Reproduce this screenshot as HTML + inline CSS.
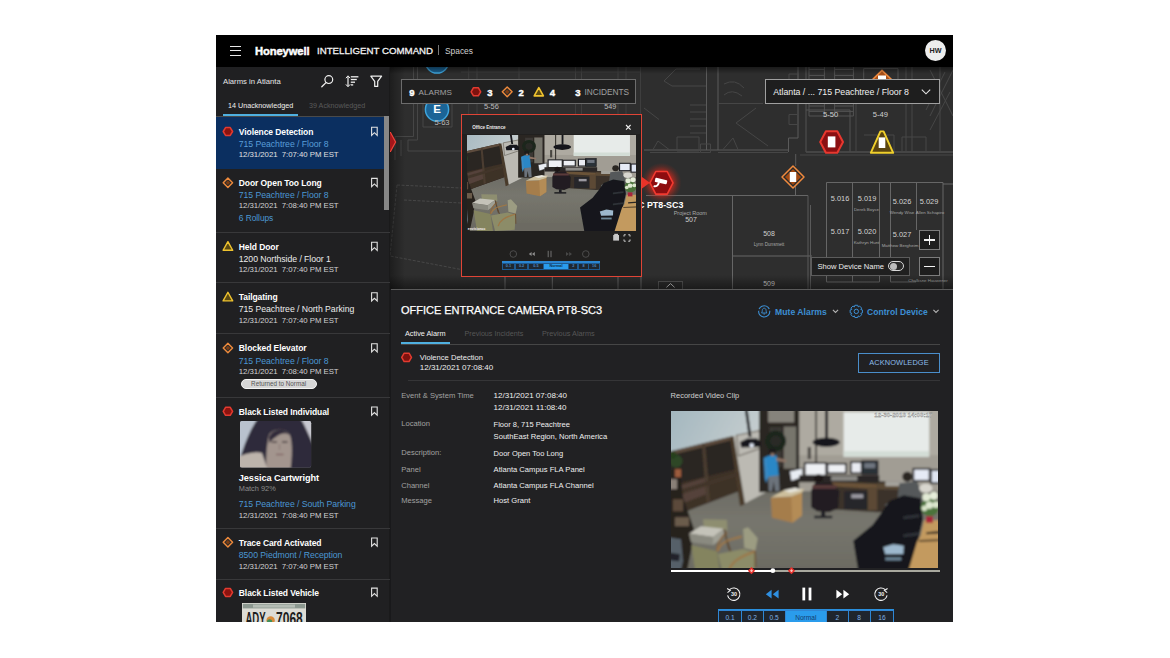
<!DOCTYPE html>
<html><head><meta charset="utf-8"><title>Honeywell Intelligent Command</title>
<style>
html,body{margin:0;padding:0;background:#fff;}
body{width:1170px;height:658px;position:relative;overflow:hidden;font-family:"Liberation Sans",sans-serif;}
.t{position:absolute;white-space:pre;display:block;}
.r{position:absolute;box-sizing:border-box;}
svg{position:absolute;overflow:visible;}
#app{position:absolute;left:216px;top:35px;width:737px;height:587px;background:#212121;overflow:hidden;}
</style></head><body>

<div class="r" style="left:216px;top:35px;width:737px;height:587px;background:#212121;"></div>
<svg width="0" height="0" style="position:absolute"><defs><filter id="vb" x="-5%" y="-5%" width="110%" height="110%"><feGaussianBlur stdDeviation="0.9"/></filter><linearGradient id="lw" x1="0" y1="0" x2="1" y2="0.3"><stop offset="0" stop-color="#9fb4bd"/><stop offset="1" stop-color="#c3ccce"/></linearGradient><linearGradient id="fl" x1="0" y1="0" x2="0" y2="1"><stop offset="0" stop-color="#66655e"/><stop offset="0.5" stop-color="#77766e"/><stop offset="1" stop-color="#6c6b62"/></linearGradient><g id="office"><rect x="-9" y="-9" width="290" height="200" fill="#706f67"/><g filter="url(#vb)"><rect x="-9" y="60" width="290" height="100" fill="url(#fl)"/><rect x="-9" y="155" width="290" height="40" fill="#6c6b62"/><rect x="126" y="-9" width="152" height="88" fill="#aeaaa1"/><rect x="126" y="44" width="152" height="36" fill="#a19d94"/><polygon points="-9,-9 90,-9 90,22 60,26 -9,43.5" fill="url(#lw)"/><polygon points="-9,42.5 60,25.5 67.5,80 22.8,97 -9,110" fill="#2c2622"/><polygon points="-9,76 65,58 67.5,80 22.8,97 -9,110" fill="#3d3027"/><polygon points="10,74 36,66 38,82 12,92" fill="#54423a"/><polygon points="-9,42.5 60,25.5 60.8,29 -9,46" fill="#5d4c3c"/><polygon points="59,26 62.5,25 73.5,93 69,95" fill="#4a3a2b"/><polygon points="31,33.5 34,32.8 39,90 35.5,91.5" fill="#4b3d30"/><polygon points="-9,84 66,61 66.6,65 -9,89" fill="#43362a"/><polygon points="62.5,25 90,18 97,80 74,92" fill="#bcbab3"/><polygon points="65.4,24.2 88.8,19.6 89,37.2 67.4,45" fill="none" stroke="#6f6a62" stroke-width="1.1"/><rect x="88" y="-9" width="40" height="90" fill="#2b2723"/><rect x="97" y="-9" width="26" height="20.5" fill="#86837b"/><rect x="112.5" y="15.5" width="12.5" height="42" fill="#77746c"/><rect x="98.5" y="16" width="12" height="40" fill="#3b3834"/><circle cx="104.5" cy="30" r="8" fill="#2a2a26" stroke="#1c281c" stroke-width="5"/><polygon points="72.6,-9 75.4,-9 80.4,26 77.6,26" fill="#17171b"/><polygon points="69,31 76,27.5 86,27.5 89.5,31 89,36 70,36.5" fill="#15151a"/><circle cx="80.6" cy="34.2" r="2.1" fill="#e8f0ff"/><rect x="154" y="-9" width="2.8" height="36" fill="#17171b"/><rect x="144.2" y="-9" width="1.5" height="61" fill="#2a2724"/><ellipse cx="155" cy="31.2" rx="13.5" ry="4.6" fill="#15151a"/><rect x="136.5" y="36" width="3.2" height="12" fill="#4a4742"/><rect x="172.4" y="1.2" width="85.4" height="44.5" fill="#e7ebe9"/><rect x="172.4" y="40" width="85.4" height="5.6" fill="#d3ddd6"/><polygon points="150,70 230,70 232,100 206,101 160,98" fill="#3a332c"/><polygon points="160,70.5 206,73 206,78 160,75" fill="#6a5238"/><rect x="196.4" y="76" width="9.5" height="23" fill="#5c4a36"/><rect x="173" y="80" width="23" height="18" fill="#28262a"/><rect x="180" y="83" width="12" height="4" fill="#9a98a0"/><polygon points="206,72 243,73 243,79 206,78" fill="#5a4936"/><rect x="214" y="70" width="18" height="5" fill="#a5a39c"/><polygon points="118.3,60 131.5,57 131.5,66 120,70.2" fill="#e9edf3" stroke="#1c1c20" stroke-width="0.8"/><rect x="133.5" y="52" width="21.5" height="12.5" fill="#eef0f4" stroke="#1c1c20" stroke-width="1.7"/><rect x="156.2" y="52.6" width="18.6" height="9.4" fill="#eef0f4" stroke="#1c1c20" stroke-width="1.7"/><rect x="179.6" y="51" width="10.8" height="11" fill="#e9ebf2" stroke="#1c1c20" stroke-width="1.7"/><rect x="190.6" y="49.8" width="16" height="13.2" fill="#2c3037" stroke="#17171b" stroke-width="1"/><rect x="193" y="52" width="11" height="5" fill="#6f7680"/><rect x="242" y="57.6" width="16.3" height="12" fill="#e6ebf6" stroke="#1c1c20" stroke-width="1.7"/><rect x="259.5" y="58.8" width="18" height="13.2" fill="#dfe5f2" stroke="#1c1c20" stroke-width="1.7"/><rect x="128" y="64" width="80" height="7" fill="#2a2725"/><rect x="160" y="65" width="26" height="4.5" fill="#8c8a86"/><polygon points="97,64 107.6,63 108.5,80 104,80 102.5,70 101,80 97.6,80" fill="#6c737b"/><polygon points="92.4,47 98,44.5 105.6,44.4 107.6,64 96.2,65.6" fill="#2b87c6"/><polygon points="105,46.5 115.4,49 115,51 105.4,50" fill="#8f7566"/><polygon points="92.6,48 95,47 97,66 95,72 93.6,66" fill="#3a8ac2"/><circle cx="101" cy="40.4" r="3.6" fill="#1d1a1a"/><rect x="99.6" y="42" width="3.4" height="3" fill="#8f7566"/><polygon points="99.6,86.2 120,85 130.8,81.4 130.8,104.2 121.2,111.4 100.8,106.6" fill="#a57d4b"/><polygon points="120,85 130.8,81.4 130.8,104.2 121.2,111.4" fill="#b48c57"/><polygon points="99.6,86.2 112,79.5 133,77.5 130.8,81.4 120,85.4" fill="#cdbf9d"/><polygon points="112,79 124,76.5 131,78.5 119,81.5" fill="#e6e4da"/><polygon points="140,79 144,71 160,71 168,80 167,97 158,101 146,100 140,96" fill="#221e20"/><rect x="141" y="74" width="24" height="3.5" fill="#5a3a3a"/><circle cx="147.4" cy="67.4" r="4.3" fill="#1b1818"/><rect x="150" y="100" width="4" height="6" fill="#1d1d20"/><rect x="143" y="104.5" width="18" height="2.5" fill="#222226"/><polygon points="228,72 246,70 251,86 250,108 226,108 214,100 216,92 226,88" fill="#55585a"/><polygon points="214,93 228,90 232,104 216,104" fill="#6b6e70"/><circle cx="236" cy="65.6" r="5" fill="#292523"/><ellipse cx="254.5" cy="77" rx="6.5" ry="4.5" fill="#d8d6cf"/><polygon points="182,129.4 201.2,113.8 210.8,100.6 218,89.8 232.4,84 249.2,87 251.6,107.8 246.8,129.4 232,190 192,190" fill="#17191d"/><polygon points="212,136 222,133 232.4,134.5 232,142.6 214,143" fill="#9db8cd"/><rect x="214" y="146" width="16" height="3" fill="#6d8698"/><polygon points="232,105 248,103 248,106 232,108" fill="#2f3237"/><polygon points="232,123 248,121 248,124 232,126" fill="#2f3237"/><polygon points="252.8,109 277,109 277,190 228,190 245.6,130.6 249.2,124.6" fill="#c39a5e"/><polygon points="248,128.6 277,127.4 277,129.4 247.4,130.6" fill="#5e4a30"/><polygon points="255,121 277,119 277,121.4 255,123" fill="#2a2622"/><circle cx="258.6" cy="96" r="9" fill="#4b733a"/><circle cx="255" cy="86" r="4" fill="#e2ead6"/><circle cx="262.5" cy="84.5" r="4" fill="#e6edda"/><circle cx="258" cy="94" r="3.6" fill="#dfe8d2"/><circle cx="264.5" cy="93.5" r="3.2" fill="#dbe6cd"/><circle cx="253" cy="97" r="2.8" fill="#d7e2c8"/><rect x="254.6" y="105" width="7" height="6.5" fill="#a8263a"/><polygon points="-9,60 9,58 12,86 23,118 20,140 10,190 -9,190" fill="#27211d"/><rect x="2" y="88" width="10" height="12" fill="#5c4a3a"/><rect x="4" y="106" width="14" height="9" fill="#6a5b4c"/><rect x="-2" y="68" width="8" height="10" fill="#8a8078"/><circle cx="5" cy="50" r="6.4" fill="#2d4628"/><circle cx="2" cy="44" r="3.5" fill="#26401f"/><rect x="4" y="58" width="6" height="8" fill="#9c5c3c"/><polygon points="-9,125 10,128 12,150 2,190 -9,190" fill="#566069"/><polygon points="-9,140 9,143 8,150 -9,148" fill="#20242a"/><polygon points="32,108 55.8,108.5 56.4,119 33,118.6" fill="#8e8e70"/><polygon points="20.4,134 46,140 50,170 26,172" fill="#84845f"/><polygon points="18,122.2 30,115 52.8,117.4 42,125.8" fill="#c4c3b9"/><polygon points="18,122.2 42,125.8 42,134 20,131" fill="#8a8a80"/><polygon points="42,125.8 52.8,117.4 53,125 42,134" fill="#9f9f94"/><path d="M46,140 C46,132 50,126 56,121" fill="none" stroke="#8b6a44" stroke-width="2"/><path d="M53,118 L58,138" stroke="#5e4830" stroke-width="1.6"/><polygon points="72,117.6 77,116 86.6,127 84.2,139.4 73.2,136.6" fill="#9c9c82"/><polygon points="46.8,142.6 72,137.6 84,141.4 82.8,166 53,168" fill="#8c8c68"/><path d="M46.8,139.6 C49,132 54,129 70.8,125.2" fill="none" stroke="#9d7747" stroke-width="2.1"/><path d="M57.6,160 C60,151 67,146 84,139.8" fill="none" stroke="#9d7747" stroke-width="2.1"/><path d="M56,130 L59.5,140" stroke="#5e4830" stroke-width="1.6"/><path d="M84,140 L84.5,156" stroke="#6e5638" stroke-width="1.6"/></g><text x="261" y="6.2" text-anchor="end" font-family="Liberation Sans" font-weight="700" font-size="5.4" fill="#f2f2f2" stroke="#6f6f6f" stroke-width="0.25" textLength="58" lengthAdjust="spacingAndGlyphs">12-30-2018 14:08:17</text></g></defs></svg>
<div class="r" style="left:389px;top:67px;width:564px;height:223px;background:#2e2e2e;"></div>
<svg width="1170" height="658" style="left:0;top:0">
<defs><radialGradient id="rg"><stop offset="0" stop-color="#ff2a1a" stop-opacity="0.9"/><stop offset="0.6" stop-color="#e8281a" stop-opacity="0.55"/><stop offset="0.82" stop-color="#d02818" stop-opacity="0.2"/><stop offset="1" stop-color="#c02818" stop-opacity="0"/></radialGradient></defs>
<g fill="none" stroke="#464646" stroke-width="1">
<path d="M413.5,67 V136.5 H395 M417.5,67 V140 H408 V151 H461 M395,136.5 V160 M401,140 V156 M423,104 V127 H452 V104"/>
<path d="M706.5,67 V150 M718,67 V150 M644,150 H788 M798,67 V138 M788.5,138 V152 M788.5,138 H798 M795.7,154 V166 M806,152 H953" stroke="#5a5a5a"/>
<path d="M650,152.5 H700 M718,152.5 H788 M700.5,144 H710.5 V152.5 H700.5 Z M718,103.5 H763"/>
<path d="M789,114.5 H798 V124.5 H789 Z M789,74 H798 V80 H789 Z"/>
<path d="M736,123 L756,108 M736,123 L768,146 M723,149.5 L733,138 L738,149.5 M644,108 L659,119.5 M653,149.5 L658,141 L669,149.5 M677,137 H699 V151 H677 Z"/>
<path d="M468.7,67 V114 M477,67 V114 M519,67 V114 M575.5,67 V114 M581.5,67 V114 M618,67 V114 M626,67 V114 M640.5,67 V114 M461,72 H640" stroke="#3e3e3e"/>
<path d="M690,105 H706 M690,112 H706 M690,119 H706 M690,126 H706 M690,133 H706"/>
<path d="M664,81 L676,69 H700 M664,81 L672,86 H706 M724,84 Q735,78 744,88 M724,95 Q732,88 742,96"/>
<path d="M806,67 V152 M809,67 V116 M824.4,67 V116 M834.6,67 V116 M853.4,67 V116 M806,110 H850 V152" stroke="#525252"/>
<path d="M809,69.4 H824.4 M809,75.4 H824.4 M809,106 H824.4 M809,111.4 H824.4 M834.6,69.4 H853.4 M834.6,75.4 H853.4 M834.6,106 H853.4 M834.6,111.4 H853.4 M809,116 H853.4 M863.7,68.6 H898 V79 M863.7,68.6 V79" stroke="#525252"/>
<path d="M930,70 L953,116 M953,70 L930,116" stroke="#484848"/>
<path d="M856,104 V152 M906,67 V152 M912,67 V152 M864,135 H894 V152 M902,137 H926 V152 H902 Z M806,152 H953 M800,155 H953"/>
<path d="M926,110 L945,72 M930,130 L950,92 M940,67 V152"/>
</g>
<g fill="none" stroke="#666666" stroke-width="1">
<path d="M646,195.5 H808 M943,184 H953 M732.5,195.5 V289 M732.5,256 H812 M795.5,183 V195.5 M505,276 V289 M552.3,276 V289 M618,276 V289 M641,276 V289"/>
<path d="M826.5,182.5 H943 M826.5,182.5 V282 M852.5,182.5 V282 M879.5,182.5 V282 M890.5,182.5 V282 M916.5,182.5 V230 M943,182.5 V289 M826.5,282 H879.5 M890.5,282 H916"/>
<path d="M808,195.5 V289 M810.5,205 V289" stroke="#5a5a5a"/>
</g>
<path d="M397,185 L461,188 M397,185 L390,256 L461,269.5 M404,200 L461,203" fill="none" stroke="#474747" stroke-width="1" stroke-dasharray="3 1.5"/>
<circle cx="437" cy="61.5" r="11.6" fill="#1b6496" stroke="#3fa6de" stroke-width="1.5"/>
<circle cx="437" cy="109.5" r="11.6" fill="#1b6496" stroke="#3fa6de" stroke-width="1.5"/>
<polygon points="870,82 882,70.4 894,82 882,93.5" fill="#a85018" stroke="#f08a3e" stroke-width="1.6"/><rect x="878" y="75.5" width="8" height="10" fill="#fff"/>
<polygon points="843.0,142.0 837.3,152.8 825.9,152.8 820.2,142.0 825.9,131.2 837.3,131.2" fill="#8a0f12" stroke="#e8382f" stroke-width="2" stroke-linejoin="round"/>
<rect x="827.8000000000001" y="136.4" width="7.6" height="11" fill="#fff"/>
<polygon points="870.8,152.8 880.4,131.4 883.6,131.4 893.2,152.8" fill="#5a4510" stroke="#f0d02c" stroke-width="1.9" stroke-linejoin="round"/>
<rect x="878.7" y="137.4" width="6.6" height="10.6" fill="#fff"/>
<polygon points="782,177 793,166 804,177 793,188" fill="#2a2a2a" stroke="#f08a3e" stroke-width="1.5" stroke-linejoin="round"/>
<polygon points="785,177 793,169 801,177 793,185" fill="#a34a12"/>
<rect x="789.8" y="172" width="6.4" height="10" fill="#fff"/>
<circle cx="661.5" cy="182.8" r="20" fill="url(#rg)"/>
<polygon points="640,175.6 649.8,182.8 640,190" fill="#ea3228"/>
<polygon points="673.0,182.8 667.2,194.1 655.8,194.1 650.0,182.8 655.8,171.5 667.2,171.5" fill="#8d0d10" stroke="#f23a30" stroke-width="1.6" stroke-linejoin="round"/>
<g transform="translate(661.1,181.20000000000002) rotate(13)"><rect x="-6.2" y="-2.2" width="12.2" height="4.2" rx="0.9" fill="#fff"/><path d="M-1.8,1.6 C-2,4.8 -3.4,6.6 -6.2,6.4" fill="none" stroke="#fff" stroke-width="1.9"/></g>
</svg>
<span class="t" style="left:437px;top:101.30px;font-size:11.5px;line-height:16px;color:#fff;font-weight:700;transform:translateX(-50%);">E</span>
<span class="t" style="left:442px;top:117.10px;font-size:7.6px;line-height:11px;color:#bdbdbd;transform:translateX(-50%);">5-63</span>
<span class="t" style="left:491.4px;top:102.00px;font-size:7.4px;line-height:10px;color:#bdbdbd;transform:translateX(-50%);">5-56</span>
<span class="t" style="left:610.3px;top:102.40px;font-size:7.2px;line-height:10px;color:#bdbdbd;transform:translateX(-50%);">549</span>
<span class="t" style="left:830.6px;top:109.10px;font-size:7.6px;line-height:11px;color:#d0d0d0;transform:translateX(-50%);">5-50</span>
<span class="t" style="left:880.4px;top:109.10px;font-size:7.6px;line-height:11px;color:#d0d0d0;transform:translateX(-50%);">5-49</span>
<span class="t" style="left:683.4px;top:198.60px;font-size:8.9px;line-height:12px;color:#fff;font-weight:700;transform:translateX(-100%);">C PT8-SC3</span>
<span class="t" style="left:690.3px;top:209.40px;font-size:5.5px;line-height:8px;color:#a8a8a8;transform:translateX(-50%);">Project Room</span>
<span class="t" style="left:691px;top:215.40px;font-size:7px;line-height:10px;color:#cfcfcf;transform:translateX(-50%);">507</span>
<span class="t" style="left:769px;top:229.40px;font-size:7px;line-height:10px;color:#cfcfcf;transform:translateX(-50%);">508</span>
<span class="t" style="left:769px;top:242.00px;font-size:4.6px;line-height:6px;color:#a8a8a8;transform:translateX(-50%);">Lynn Dunsmett</span>
<span class="t" style="left:769px;top:279.00px;font-size:7px;line-height:10px;color:#cfcfcf;transform:translateX(-50%);">509</span>
<span class="t" style="left:840px;top:193.60px;font-size:7.4px;line-height:10px;color:#d4d4d4;transform:translateX(-50%);">5.016</span>
<span class="t" style="left:867px;top:193.60px;font-size:7.4px;line-height:10px;color:#d4d4d4;transform:translateX(-50%);">5.019</span>
<span class="t" style="left:902px;top:196.60px;font-size:7.4px;line-height:10px;color:#d4d4d4;transform:translateX(-50%);">5.026</span>
<span class="t" style="left:929px;top:196.60px;font-size:7.4px;line-height:10px;color:#d4d4d4;transform:translateX(-50%);">5.029</span>
<span class="t" style="left:840px;top:227.00px;font-size:7.4px;line-height:10px;color:#d4d4d4;transform:translateX(-50%);">5.017</span>
<span class="t" style="left:867px;top:227.00px;font-size:7.4px;line-height:10px;color:#d4d4d4;transform:translateX(-50%);">5.020</span>
<span class="t" style="left:902px;top:230.00px;font-size:7.4px;line-height:10px;color:#d4d4d4;transform:translateX(-50%);">5.027</span>
<span class="t" style="left:866.5px;top:206.80px;font-size:4.4px;line-height:6px;color:#a6a6a6;transform:translateX(-50%);">Derek Boyce</span>
<span class="t" style="left:902px;top:209.80px;font-size:4.4px;line-height:6px;color:#a6a6a6;transform:translateX(-50%);">Wendy Wise</span>
<span class="t" style="left:930px;top:209.80px;font-size:4.4px;line-height:6px;color:#a6a6a6;transform:translateX(-50%);">Allen Schapiro</span>
<span class="t" style="left:866.5px;top:240.20px;font-size:4.4px;line-height:6px;color:#a6a6a6;transform:translateX(-50%);">Kathryn Hunt</span>
<span class="t" style="left:900px;top:243.00px;font-size:4.4px;line-height:6px;color:#a6a6a6;transform:translateX(-50%);">Matthew Bergheim</span>
<span class="t" style="left:928px;top:278.00px;font-size:4.4px;line-height:6px;color:#a6a6a6;transform:translateX(-50%);">Chalksne Hauwener</span>
<div class="r" style="left:658px;top:281px;width:25px;height:9px;background:#2b2b2b;border:1px solid #565656;border-bottom:none;"></div>
<svg width="1170" height="658" style="left:0;top:0"><path d="M666.4,287.4 L670.5,283.6 L674.6,287.4" fill="none" stroke="#c8c8c8" stroke-width="1"/></svg>
<div class="r" style="left:389px;top:67px;width:16px;height:223px;background:linear-gradient(to right, rgba(0,0,0,0.38), rgba(0,0,0,0));"></div>
<div class="r" style="left:389px;top:67px;width:564px;height:7px;background:linear-gradient(to bottom, rgba(0,0,0,0.45), rgba(0,0,0,0));"></div>
<div class="r" style="left:389px;top:275px;width:564px;height:14px;background:linear-gradient(to top, rgba(0,0,0,0.42), rgba(0,0,0,0));"></div>
<svg width="1170" height="658" style="left:0;top:0"><polygon points="385,132.5 390.5,132.5 395.6,142 390.5,151.5 385,151.5" fill="#a5161a" stroke="#f0453a" stroke-width="1.2"/></svg>
<div class="r" style="left:401.2px;top:79.2px;width:235px;height:24.6px;background:#202020;border:1px solid #6c6c6c;"></div>
<span class="t" style="left:409.2px;top:85.50px;font-size:9.5px;line-height:13px;color:#fff;font-weight:700;-webkit-text-stroke:0.4px #fff;">9</span>
<span class="t" style="left:418.6px;top:86.80px;font-size:8.1px;line-height:11px;color:#a0a0a0;">ALARMS</span>
<span class="t" style="left:487.2px;top:85.50px;font-size:9.5px;line-height:13px;color:#fff;font-weight:700;-webkit-text-stroke:0.4px #fff;">3</span>
<span class="t" style="left:518.6px;top:85.50px;font-size:9.5px;line-height:13px;color:#fff;font-weight:700;-webkit-text-stroke:0.4px #fff;">2</span>
<span class="t" style="left:549.8px;top:85.50px;font-size:9.5px;line-height:13px;color:#fff;font-weight:700;-webkit-text-stroke:0.4px #fff;">4</span>
<span class="t" style="left:575.2px;top:85.50px;font-size:9.5px;line-height:13px;color:#fff;font-weight:700;-webkit-text-stroke:0.4px #fff;">3</span>
<span class="t" style="left:584.4px;top:86.30px;font-size:8.3px;line-height:12px;color:#a0a0a0;">INCIDENTS</span>
<svg width="1170" height="658" style="left:0;top:0">
<polygon points="480.70,91.80 478.30,95.87 473.50,95.87 471.10,91.80 473.50,87.73 478.30,87.73" fill="#7e120e" stroke="#e23b30" stroke-width="1.5" stroke-linejoin="round"/>
<polygon points="502.3,91.8 507.2,86.89999999999999 512.1,91.8 507.2,96.7" fill="#2a2a2a" stroke="#ee8a3c" stroke-width="1.4" stroke-linejoin="round"/>
<polygon points="504.848,91.8 507.2,89.448 509.55199999999996,91.8 507.2,94.152" fill="#7c3d14"/>
<polygon points="534.1999999999999,95.91 538.8,87.63 543.4,95.91" fill="#5b4a12" stroke="#efc32f" stroke-width="1.6" stroke-linejoin="round"/>
</svg>
<div class="r" style="left:765px;top:79.3px;width:175px;height:24.4px;background:#1e1e1e;border:1px solid #a0a0a0;"></div>
<span class="t" style="left:773.2px;top:86.00px;font-size:8.8px;line-height:12px;color:#f0f0f0;letter-spacing:-0.02px;">Atlanta / ... 715 Peachtree / Floor 8</span>
<svg width="1170" height="658" style="left:0;top:0"><path d="M921.8,89.6 L926,93.8 L930.2,89.6" fill="none" stroke="#e4e4e4" stroke-width="1.1"/></svg>
<div class="r" style="left:811.2px;top:256.8px;width:98.4px;height:19.4px;background:#202020;border:1px solid #5c5c5c;"></div>
<span class="t" style="left:817.4px;top:261.10px;font-size:7.6px;line-height:11px;color:#ececec;">Show Device Name</span>
<div class="r" style="left:888.4px;top:261.4px;width:15.6px;height:9.6px;background:#2a2a2a;border:1px solid #d8d8d8;border-radius:5px;"></div>
<div class="r" style="left:889.8px;top:262.7px;width:7px;height:7px;background:#bdbdbd;border-radius:50%;"></div>
<div class="r" style="left:918.8px;top:229.8px;width:21px;height:20.4px;background:#1e1e1e;border:1px solid #7c7c7c;"></div>
<div class="r" style="left:918.8px;top:256.8px;width:21px;height:19.4px;background:#1e1e1e;border:1px solid #7c7c7c;"></div>
<div class="r" style="left:924.2px;top:239.4px;width:10.4px;height:1.3px;background:#f4f4f4;"></div>
<div class="r" style="left:928.75px;top:234.8px;width:1.3px;height:10.4px;background:#f4f4f4;"></div>
<div class="r" style="left:924.2px;top:265.9px;width:10.4px;height:1.3px;background:#f4f4f4;"></div>
<div class="r" style="left:460.6px;top:113.6px;width:181.4px;height:163px;background:#21201f;border:1.6px solid #e04436;"></div>
<div class="r" style="left:462.2px;top:115.2px;width:178.2px;height:19px;background:#272727;"></div>
<span class="t" style="left:472.2px;top:125.20px;font-size:4.6px;line-height:6px;color:#e8e8e8;font-weight:700;letter-spacing:-0.05px;">Office Entrance</span>
<svg width="1170" height="658" style="left:0;top:0"><path d="M626,125 l4.6,4.6 M630.6,125 l-4.6,4.6" stroke="#f0f0f0" stroke-width="1.1"/></svg>
<svg style="left:467px;top:134.6px;overflow:hidden" width="169" height="96.4" viewBox="10.3 11.5 256.7 157" preserveAspectRatio="none"><use href="#office"/></svg>
<span class="t" style="left:467.8px;top:226.90px;font-size:3.4px;line-height:5px;color:#f4f4f4;font-weight:700;">envisioncc</span>
<svg width="1170" height="658" style="left:0;top:0">
<rect x="613.2" y="235" width="5.8" height="5.6" fill="#c8c8c8"/><rect x="614.2" y="233.8" width="3.8" height="1.6" fill="#c8c8c8"/>
<path d="M624,236.6 v-1.8 h1.8 M628.2,234.8 h1.8 v1.8 M630,239.4 v1.8 h-1.8 M625.8,241.2 h-1.8 v-1.8" fill="none" stroke="#d8d8d8" stroke-width="0.9"/>
<circle cx="513.3" cy="254" r="3.3" fill="none" stroke="#505050" stroke-width="0.9"/><circle cx="585.8" cy="254" r="3.3" fill="none" stroke="#505050" stroke-width="0.9"/>
<path d="M531.6,252 l-2.8,2 l2.8,2 z M534.8,252 l-2.8,2 l2.8,2 z" fill="#8e8e8e"/>
<path d="M548.2,250.8 v6.4 M551,250.8 v6.4" stroke="#7a7a7a" stroke-width="0.9"/>
<path d="M566,252 l2.8,2 l-2.8,2 z M569.2,252 l2.8,2 l-2.8,2 z" fill="#484848"/>
</svg>
<div class="r" style="left:501.6px;top:261.4px;width:98px;height:1.4px;background:#2a86d2;"></div>
<div class="r" style="left:501.8px;top:262.6px;width:13.300000000000011px;height:7.2px;background:#1f2730;border:0.6px solid #1f5a90;"></div>
<span class="t" style="left:508.50000000000006px;top:263.70px;font-size:3.8px;line-height:5px;color:#4f8ac0;font-weight:700;transform:translateX(-50%);">0.1</span>
<div class="r" style="left:514.6px;top:262.6px;width:13.899999999999977px;height:7.2px;background:#1f2730;border:0.6px solid #1f5a90;"></div>
<span class="t" style="left:521.5999999999999px;top:263.70px;font-size:3.8px;line-height:5px;color:#4f8ac0;font-weight:700;transform:translateX(-50%);">0.2</span>
<div class="r" style="left:528px;top:262.6px;width:15.700000000000045px;height:7.2px;background:#1f2730;border:0.6px solid #1f5a90;"></div>
<span class="t" style="left:535.9px;top:263.70px;font-size:3.8px;line-height:5px;color:#4f8ac0;font-weight:700;transform:translateX(-50%);">0.5</span>
<div class="r" style="left:543.2px;top:262.6px;width:25.5px;height:7.2px;background:#2a9cec;border:0.6px solid #1f5a90;"></div>
<span class="t" style="left:556.0px;top:263.70px;font-size:3.8px;line-height:5px;color:#0c2a48;font-weight:700;transform:translateX(-50%);">Normal</span>
<div class="r" style="left:568.2px;top:262.6px;width:10.299999999999955px;height:7.2px;background:#1f2730;border:0.6px solid #1f5a90;"></div>
<span class="t" style="left:573.4px;top:263.70px;font-size:3.8px;line-height:5px;color:#4f8ac0;font-weight:700;transform:translateX(-50%);">2</span>
<div class="r" style="left:578px;top:262.6px;width:10.899999999999977px;height:7.2px;background:#1f2730;border:0.6px solid #1f5a90;"></div>
<span class="t" style="left:583.5px;top:263.70px;font-size:3.8px;line-height:5px;color:#4f8ac0;font-weight:700;transform:translateX(-50%);">8</span>
<div class="r" style="left:588.4px;top:262.6px;width:11.5px;height:7.2px;background:#1f2730;border:0.6px solid #1f5a90;"></div>
<span class="t" style="left:594.1999999999999px;top:263.70px;font-size:3.8px;line-height:5px;color:#4f8ac0;font-weight:700;transform:translateX(-50%);">16</span>
<div class="r" style="left:389px;top:289px;width:564px;height:333px;background:#212123;"></div>
<div class="r" style="left:389px;top:288.6px;width:564px;height:1.2px;background:#5a5a5a;"></div>
<span class="t" style="left:401px;top:303.10px;font-size:11px;line-height:15px;color:#ffffff;letter-spacing:-0.02px;-webkit-text-stroke:0.25px #fff;">OFFICE ENTRANCE CAMERA PT8-SC3</span>
<span class="t" style="left:775px;top:305.60px;font-size:8.6px;line-height:12px;color:#3d8fd3;font-weight:700;letter-spacing:0.05px;">Mute Alarms</span>
<span class="t" style="left:867px;top:305.60px;font-size:8.5px;line-height:12px;color:#3d8fd3;font-weight:700;letter-spacing:0.05px;">Control Device</span>
<span class="t" style="left:405px;top:328.60px;font-size:7.3px;line-height:10px;color:#f2f2f2;">Active Alarm</span>
<span class="t" style="left:464.5px;top:328.60px;font-size:7.2px;line-height:10px;color:#565656;">Previous Incidents</span>
<span class="t" style="left:542px;top:328.60px;font-size:7.3px;line-height:10px;color:#565656;">Previous Alarms</span>
<div class="r" style="left:401px;top:343.6px;width:539px;height:1px;background:#464646;"></div>
<div class="r" style="left:401px;top:342px;width:49px;height:2.2px;background:#4fb0e0;"></div>
<span class="t" style="left:419.8px;top:351.80px;font-size:7.6px;line-height:11px;color:#eeeeee;">Violence Detection</span>
<span class="t" style="left:419.8px;top:362.40px;font-size:8px;line-height:11px;color:#eeeeee;">12/31/2021 07:08:40</span>
<div class="r" style="left:858px;top:352.8px;width:82px;height:20.4px;border:1.1px solid #4a8ecb;"></div>
<span class="t" style="left:899px;top:357.60px;font-size:7.4px;line-height:10px;color:#8dbdea;letter-spacing:0.1px;transform:translateX(-50%);">ACKNOWLEDGE</span>
<div class="r" style="left:408px;top:379.7px;width:532px;height:1px;background:#353537;"></div>
<span class="t" style="left:401.2px;top:390.20px;font-size:7.6px;line-height:11px;color:#a2a2a2;">Event &amp; System Time</span>
<span class="t" style="left:401.2px;top:418.20px;font-size:7.6px;line-height:11px;color:#a2a2a2;">Location</span>
<span class="t" style="left:401.2px;top:446.70px;font-size:7.6px;line-height:11px;color:#a2a2a2;">Description:</span>
<span class="t" style="left:401.2px;top:463.70px;font-size:7.6px;line-height:11px;color:#a2a2a2;">Panel</span>
<span class="t" style="left:401.2px;top:480.20px;font-size:7.6px;line-height:11px;color:#a2a2a2;">Channel</span>
<span class="t" style="left:401.2px;top:495.20px;font-size:7.6px;line-height:11px;color:#a2a2a2;">Message</span>
<span class="t" style="left:493.6px;top:390.40px;font-size:8px;line-height:11px;color:#f0f0f0;">12/31/2021 07:08:40</span>
<span class="t" style="left:493.6px;top:402.20px;font-size:8px;line-height:11px;color:#f0f0f0;">12/31/2021 11:08:40</span>
<span class="t" style="left:493.6px;top:419.70px;font-size:7.5px;line-height:10px;color:#f0f0f0;">Floor 8, 715 Peachtree</span>
<span class="t" style="left:493.6px;top:430.70px;font-size:7.6px;line-height:11px;color:#f0f0f0;">SouthEast Region, North America</span>
<span class="t" style="left:493.6px;top:448.60px;font-size:7.5px;line-height:10px;color:#f0f0f0;">Door Open Too Long</span>
<span class="t" style="left:493.6px;top:464.00px;font-size:7.6px;line-height:11px;color:#f0f0f0;">Atlanta Campus FLA Panel</span>
<span class="t" style="left:493.6px;top:480.40px;font-size:7.6px;line-height:11px;color:#f0f0f0;">Atlanta Campus FLA Channel</span>
<span class="t" style="left:493.6px;top:495.40px;font-size:7.6px;line-height:11px;color:#f0f0f0;">Host Grant</span>
<span class="t" style="left:670.6px;top:390.70px;font-size:7.5px;line-height:10px;color:#cfcfcf;">Recorded Video Clip</span>
<svg width="1170" height="658" style="left:0;top:0">
<polygon points="411.50,357.40 409.05,361.56 404.15,361.56 401.70,357.40 404.15,353.24 409.05,353.24" fill="#7e120e" stroke="#e23b30" stroke-width="1.5" stroke-linejoin="round"/>
<circle cx="764.2" cy="311.4" r="5.6" fill="none" stroke="#3d8fd3" stroke-width="1.1"/>
<path d="M761.6,313.0 c0.4,-0.6 0.7,-1.4 0.7,-2.6 c0,-1.4 0.9,-2.2 1.9,-2.2 s1.9,0.8 1.9,2.2 c0,1.2 0.3,2 0.7,2.6 z M763.4000000000001,314.0 h1.6" fill="none" stroke="#3d8fd3" stroke-width="0.9"/>
<path d="M757.6,309.9 h2.2 M768.6,309.9 h2.2" stroke="#212123" stroke-width="1.6"/>
<path d="M832.9,309.8 l2.6,2.6 l2.6,-2.6" fill="none" stroke="#b4b4b4" stroke-width="1.1"/>
<path d="M933.4,309.8 l2.6,2.6 l2.6,-2.6" fill="none" stroke="#b4b4b4" stroke-width="1.1"/>
<polygon points="862.43,309.96 862.43,312.84 860.81,313.31 860.84,313.24 861.65,314.72 859.62,316.75 858.14,315.94 858.21,315.91 857.74,317.53 854.86,317.53 854.39,315.91 854.46,315.94 852.98,316.75 850.95,314.72 851.76,313.24 851.79,313.31 850.17,312.84 850.17,309.96 851.79,309.49 851.76,309.56 850.95,308.08 852.98,306.05 854.46,306.86 854.39,306.89 854.86,305.27 857.74,305.27 858.21,306.89 858.14,306.86 859.62,306.05 861.65,308.08 860.84,309.56 860.81,309.49" fill="none" stroke="#3d8fd3" stroke-width="1" stroke-linejoin="round"/>
<circle cx="856.3" cy="311.4" r="2.2" fill="none" stroke="#3d8fd3" stroke-width="1"/>
</svg>
<svg style="left:671px;top:411px;overflow:hidden" width="267.4" height="157.4" viewBox="0 0 267 157" preserveAspectRatio="none"><use href="#office"/></svg>
<div class="r" style="left:671px;top:569.6px;width:269px;height:2.2px;background:#a9a99f;"></div>
<div class="r" style="left:671px;top:569.5px;width:102px;height:2.4px;background:#ffffff;"></div>
<svg width="1170" height="658" style="left:0;top:0">
<circle cx="772.8" cy="570.7" r="2.4" fill="#fff"/>
<polygon points="747.9,570.7 751.5,567.1 755.1,570.7 751.5,574.3" fill="#e8302c"/><polygon points="750.0,570.7 751.5,569.2 753.0,570.7 751.5,572.2" fill="#f6c8c0"/>
<polygon points="787.9,570.7 791.5,567.1 795.1,570.7 791.5,574.3" fill="#e8302c"/><polygon points="790.0,570.7 791.5,569.2 793.0,570.7 791.5,572.2" fill="#f6c8c0"/>
<g transform="translate(733.7,594.2) scale(1,1)"><path d="M-4.2,-4.6 A6.2,6.2 0 1 1 -6.1,1.2" fill="none" stroke="#f2f2f2" stroke-width="1.1"/><path d="M-6.6,-5.6 L-3.4,-3.8 L-6.2,-1.6" fill="none" stroke="#f2f2f2" stroke-width="1.1"/></g>
<text x="733.9000000000001" y="596.2" text-anchor="middle" font-family="Liberation Sans" font-size="5.4" font-weight="700" fill="#f2f2f2">30</text>
<g transform="translate(881,594.2) scale(-1,1)"><path d="M-4.2,-4.6 A6.2,6.2 0 1 1 -6.1,1.2" fill="none" stroke="#f2f2f2" stroke-width="1.1"/><path d="M-6.6,-5.6 L-3.4,-3.8 L-6.2,-1.6" fill="none" stroke="#f2f2f2" stroke-width="1.1"/></g>
<text x="881.2" y="596.2" text-anchor="middle" font-family="Liberation Sans" font-size="5.4" font-weight="700" fill="#f2f2f2">30</text>
<path d="M771.6,589.8 l-5.8,4.4 l5.8,4.4 z M778.6,589.8 l-5.8,4.4 l5.8,4.4 z" fill="#2f8fe0"/>
<rect x="802.4" y="587.6" width="2.8" height="12.8" fill="#fff"/><rect x="808.6" y="587.6" width="2.8" height="12.8" fill="#fff"/>
<path d="M836.4,589.8 l5.8,4.4 l-5.8,4.4 z M843.4,589.8 l5.8,4.4 l-5.8,4.4 z" fill="#fff"/>
</svg>
<div class="r" style="left:718px;top:608.8px;width:175.6px;height:1.6px;background:#2a8fdc;"></div>
<div class="r" style="left:718px;top:610px;width:24px;height:14px;background:#1f252d;border:1px solid #2f86d4;"></div>
<span class="t" style="left:730.0px;top:613.10px;font-size:6.6px;line-height:9px;color:#7fb2e4;transform:translateX(-50%);">0.1</span>
<div class="r" style="left:741px;top:610px;width:22.600000000000023px;height:14px;background:#1f252d;border:1px solid #2f86d4;"></div>
<span class="t" style="left:752.3px;top:613.10px;font-size:6.6px;line-height:9px;color:#7fb2e4;transform:translateX(-50%);">0.2</span>
<div class="r" style="left:762.6px;top:610px;width:23.0px;height:14px;background:#1f252d;border:1px solid #2f86d4;"></div>
<span class="t" style="left:774.1px;top:613.10px;font-size:6.6px;line-height:9px;color:#7fb2e4;transform:translateX(-50%);">0.5</span>
<div class="r" style="left:784.6px;top:610px;width:42.39999999999998px;height:14px;background:#2a9cec;border:1px solid #2f86d4;"></div>
<span class="t" style="left:805.8px;top:613.10px;font-size:6.6px;line-height:9px;color:#14406e;transform:translateX(-50%);">Normal</span>
<div class="r" style="left:826px;top:610px;width:22.600000000000023px;height:14px;background:#1f252d;border:1px solid #2f86d4;"></div>
<span class="t" style="left:837.3px;top:613.10px;font-size:6.6px;line-height:9px;color:#7fb2e4;transform:translateX(-50%);">2</span>
<div class="r" style="left:847.6px;top:610px;width:23.199999999999932px;height:14px;background:#1f252d;border:1px solid #2f86d4;"></div>
<span class="t" style="left:859.2px;top:613.10px;font-size:6.6px;line-height:9px;color:#7fb2e4;transform:translateX(-50%);">8</span>
<div class="r" style="left:869.8px;top:610px;width:24.200000000000045px;height:14px;background:#1f252d;border:1px solid #2f86d4;"></div>
<span class="t" style="left:881.9px;top:613.10px;font-size:6.6px;line-height:9px;color:#7fb2e4;transform:translateX(-50%);">16</span>
<div class="r" style="left:216px;top:67px;width:174px;height:555px;background:#202022;"></div>
<div class="r" style="left:389px;top:289px;width:1.6px;height:333px;background:#19191b;"></div>
<span class="t" style="left:223px;top:75.80px;font-size:7.7px;line-height:11px;color:#e6e6e6;">Alarms in Atlanta</span>
<span class="t" style="left:228px;top:101.20px;font-size:7.2px;line-height:10px;color:#f0f0f0;">14 Unacknowledged</span>
<span class="t" style="left:309px;top:101.20px;font-size:7.2px;line-height:10px;color:#5a5a5a;">39 Acknowledged</span>
<div class="r" style="left:216px;top:116px;width:173px;height:1px;background:#4a4a4a;"></div>
<div class="r" style="left:223px;top:113.8px;width:74.5px;height:2.2px;background:#4fb0e0;"></div>
<div class="r" style="left:216px;top:117px;width:168.4px;height:51.6px;background:#0b2f60;"></div>
<div class="r" style="left:384.4px;top:116px;width:4.2px;height:94px;background:#878787;"></div>
<div class="r" style="left:388.6px;top:67px;width:1.6px;height:555px;background:#1a1a1b;"></div>
<div class="r" style="left:216px;top:231.5px;width:174px;height:1px;background:#38383a;"></div>
<div class="r" style="left:216px;top:282.2px;width:174px;height:1px;background:#38383a;"></div>
<div class="r" style="left:216px;top:333.2px;width:174px;height:1px;background:#38383a;"></div>
<div class="r" style="left:216px;top:397.2px;width:174px;height:1px;background:#38383a;"></div>
<div class="r" style="left:216px;top:528.2px;width:174px;height:1px;background:#38383a;"></div>
<div class="r" style="left:216px;top:579px;width:174px;height:1px;background:#38383a;"></div>
<svg width="1170" height="658" style="left:0;top:0">
<polygon points="232.60,131.50 230.25,135.49 225.55,135.49 223.20,131.50 225.55,127.51 230.25,127.51" fill="#8c130f" stroke="#e23b30" stroke-width="1.5" stroke-linejoin="round"/>
<path d="M371.6,127.20000000000002 h5.6 v8.2 l-2.8,-2.7 l-2.8,2.7 z" fill="none" stroke="#e2e2e2" stroke-width="1.1" stroke-linejoin="miter"/>
<polygon points="223.20000000000002,182.7 227.9,178.0 232.6,182.7 227.9,187.39999999999998" fill="#2a2a2a" stroke="#ee8a3c" stroke-width="1.4" stroke-linejoin="round"/>
<polygon points="225.644,182.7 227.9,180.444 230.156,182.7 227.9,184.956" fill="#7c3d14"/>
<path d="M371.6,178.4 h5.6 v8.2 l-2.8,-2.7 l-2.8,2.7 z" fill="none" stroke="#e2e2e2" stroke-width="1.1" stroke-linejoin="miter"/>
<polygon points="223.1,250.28 227.9,241.64 232.70000000000002,250.28" fill="#5b4a12" stroke="#efc32f" stroke-width="1.4" stroke-linejoin="round"/>
<path d="M371.6,242.20000000000002 h5.6 v8.2 l-2.8,-2.7 l-2.8,2.7 z" fill="none" stroke="#e2e2e2" stroke-width="1.1" stroke-linejoin="miter"/>
<polygon points="223.1,300.87999999999994 227.9,292.23999999999995 232.70000000000002,300.87999999999994" fill="#5b4a12" stroke="#efc32f" stroke-width="1.4" stroke-linejoin="round"/>
<path d="M371.6,292.79999999999995 h5.6 v8.2 l-2.8,-2.7 l-2.8,2.7 z" fill="none" stroke="#e2e2e2" stroke-width="1.1" stroke-linejoin="miter"/>
<polygon points="223.20000000000002,348.0 227.9,343.3 232.6,348.0 227.9,352.7" fill="#2a2a2a" stroke="#ee8a3c" stroke-width="1.4" stroke-linejoin="round"/>
<polygon points="225.644,348.0 227.9,345.744 230.156,348.0 227.9,350.256" fill="#7c3d14"/>
<path d="M371.6,343.7 h5.6 v8.2 l-2.8,-2.7 l-2.8,2.7 z" fill="none" stroke="#e2e2e2" stroke-width="1.1" stroke-linejoin="miter"/>
<polygon points="232.60,411.30 230.25,415.29 225.55,415.29 223.20,411.30 225.55,407.31 230.25,407.31" fill="#8c130f" stroke="#e23b30" stroke-width="1.5" stroke-linejoin="round"/>
<path d="M371.6,407.0 h5.6 v8.2 l-2.8,-2.7 l-2.8,2.7 z" fill="none" stroke="#e2e2e2" stroke-width="1.1" stroke-linejoin="miter"/>
<polygon points="223.20000000000002,542.3000000000001 227.9,537.6 232.6,542.3000000000001 227.9,547.0000000000001" fill="#2a2a2a" stroke="#ee8a3c" stroke-width="1.4" stroke-linejoin="round"/>
<polygon points="225.644,542.3000000000001 227.9,540.0440000000001 230.156,542.3000000000001 227.9,544.556" fill="#7c3d14"/>
<path d="M371.6,538.0 h5.6 v8.2 l-2.8,-2.7 l-2.8,2.7 z" fill="none" stroke="#e2e2e2" stroke-width="1.1" stroke-linejoin="miter"/>
<polygon points="232.60,592.40 230.25,596.39 225.55,596.39 223.20,592.40 225.55,588.41 230.25,588.41" fill="#8c130f" stroke="#e23b30" stroke-width="1.5" stroke-linejoin="round"/>
<path d="M371.6,588.1 h5.6 v8.2 l-2.8,-2.7 l-2.8,2.7 z" fill="none" stroke="#e2e2e2" stroke-width="1.1" stroke-linejoin="miter"/>
<circle cx="328.8" cy="79.6" r="3.9" fill="none" stroke="#f0f0f0" stroke-width="1.2"/>
<path d="M326,82.6 L321.8,86.8" stroke="#f0f0f0" stroke-width="1.3" stroke-linecap="round"/>
<path d="M348,76.6 V86" stroke="#f0f0f0" stroke-width="1.2"/>
<path d="M345.9,78.2 L348,75.8 L350.1,78.2 M345.9,84.4 L348,86.8 L350.1,84.4" stroke="#f0f0f0" stroke-width="1" fill="none"/>
<path d="M350.8,76.8 h7.6" stroke="#f0f0f0" stroke-width="1.3"/>
<path d="M350.8,79.5 h6" stroke="#f0f0f0" stroke-width="1.3"/>
<path d="M350.8,82.2 h4.2" stroke="#f0f0f0" stroke-width="1.3"/>
<path d="M350.8,84.9 h2.4" stroke="#f0f0f0" stroke-width="1.3"/>
<path d="M370.8,76.2 H381.6 L377.7,81.4 V86.4 H374.7 V81.4 Z" fill="none" stroke="#f0f0f0" stroke-width="1.2" stroke-linejoin="round"/>
</svg>
<span class="t" style="left:238.8px;top:125.80px;font-size:8.5px;line-height:12px;color:#ffffff;font-weight:700;letter-spacing:-0.08px;">Violence Detection</span>
<span class="t" style="left:238.8px;top:138.00px;font-size:8.7px;line-height:12px;color:#5a9ed8;letter-spacing:-0.05px;">715 Peachtree / Floor 8</span>
<span class="t" style="left:238.8px;top:149.30px;font-size:7.8px;line-height:11px;color:#e0e0e0;letter-spacing:-0.03px;">12/31/2021  7:07:40 PM EST</span>
<span class="t" style="left:238.8px;top:177.00px;font-size:8.5px;line-height:12px;color:#ffffff;font-weight:700;letter-spacing:-0.08px;">Door Open Too Long</span>
<span class="t" style="left:238.8px;top:189.20px;font-size:8.7px;line-height:12px;color:#4b97d3;letter-spacing:-0.05px;">715 Peachtree / Floor 8</span>
<span class="t" style="left:238.8px;top:200.40px;font-size:7.8px;line-height:11px;color:#d2d2d2;letter-spacing:-0.03px;">12/31/2021  7:08:40 PM EST</span>
<span class="t" style="left:238.8px;top:212.00px;font-size:8.4px;line-height:12px;color:#4b97d3;letter-spacing:-0.05px;">6 Rollups</span>
<span class="t" style="left:238.8px;top:240.80px;font-size:8.5px;line-height:12px;color:#ffffff;font-weight:700;letter-spacing:-0.08px;">Held Door</span>
<span class="t" style="left:238.8px;top:253.00px;font-size:8.7px;line-height:12px;color:#ececec;letter-spacing:-0.05px;">1200 Northside / Floor 1</span>
<span class="t" style="left:238.8px;top:264.20px;font-size:7.8px;line-height:11px;color:#d2d2d2;letter-spacing:-0.03px;">12/31/2021  7:07:40 PM EST</span>
<span class="t" style="left:238.8px;top:291.40px;font-size:8.5px;line-height:12px;color:#ffffff;font-weight:700;letter-spacing:-0.08px;">Tailgating</span>
<span class="t" style="left:238.8px;top:303.40px;font-size:8.7px;line-height:12px;color:#ececec;letter-spacing:-0.05px;">715 Peachtree / North Parking</span>
<span class="t" style="left:238.8px;top:314.80px;font-size:7.8px;line-height:11px;color:#d2d2d2;letter-spacing:-0.03px;">12/31/2021  7:07:40 PM EST</span>
<span class="t" style="left:238.8px;top:342.30px;font-size:8.5px;line-height:12px;color:#ffffff;font-weight:700;letter-spacing:-0.08px;">Blocked Elevator</span>
<span class="t" style="left:238.8px;top:354.50px;font-size:8.7px;line-height:12px;color:#4b97d3;letter-spacing:-0.05px;">715 Peachtree / Floor 8</span>
<span class="t" style="left:238.8px;top:366.30px;font-size:7.8px;line-height:11px;color:#d2d2d2;letter-spacing:-0.03px;">12/31/2021  7:08:40 PM EST</span>
<span class="t" style="left:238.8px;top:405.60px;font-size:8.5px;line-height:12px;color:#ffffff;font-weight:700;letter-spacing:-0.08px;">Black Listed Individual</span>
<span class="t" style="left:238.8px;top:498.40px;font-size:8.7px;line-height:12px;color:#4b97d3;letter-spacing:-0.05px;">715 Peachtree / South Parking</span>
<span class="t" style="left:238.8px;top:509.60px;font-size:7.8px;line-height:11px;color:#d2d2d2;letter-spacing:-0.03px;">12/31/2021  7:08:40 PM EST</span>
<span class="t" style="left:238.8px;top:536.60px;font-size:8.5px;line-height:12px;color:#ffffff;font-weight:700;letter-spacing:-0.08px;">Trace Card Activated</span>
<span class="t" style="left:238.8px;top:549.30px;font-size:8.7px;line-height:12px;color:#4b97d3;letter-spacing:-0.05px;">8500 Piedmont / Reception</span>
<span class="t" style="left:238.8px;top:560.50px;font-size:7.8px;line-height:11px;color:#d2d2d2;letter-spacing:-0.03px;">12/31/2021  7:07:40 PM EST</span>
<span class="t" style="left:238.8px;top:586.70px;font-size:8.5px;line-height:12px;color:#ffffff;font-weight:700;letter-spacing:-0.08px;">Black Listed Vehicle</span>
<div class="r" style="left:240.6px;top:378.8px;width:76px;height:10px;background:#d6d6d6;border-radius:5px;border:0.6px solid #f4f4f4;"></div>
<span class="t" style="left:278.6px;top:379.40px;font-size:6.3px;line-height:9px;color:#555;transform:translateX(-50%);">Returned to Normal</span>
<svg style="left:240.3px;top:421.4px" width="71.2" height="46.6" viewBox="0 0 71.2 46.6"><defs><clipPath id="pc"><rect width="71.2" height="46.6" rx="2.2"/></clipPath><filter id="pb" x="-10%" y="-10%" width="120%" height="120%"><feGaussianBlur stdDeviation="1.2"/></filter></defs><g clip-path="url(#pc)"><rect width="71.2" height="46.6" fill="#b7bcc8"/><g filter="url(#pb)"><rect x="-4" y="-4" width="24" height="44" fill="#b9c2ce"/><rect x="58" y="-4" width="18" height="56" fill="#cfcfd6"/><path d="M-4,52 C0,36 8,10 19,-4 H60 C68,6 72,22 76,30 V52 Z" fill="#2f2a3a"/><path d="M60,-4 C66,6 70,18 76,28 V-4 Z" fill="#c8c8d0"/><path d="M27,52 C25,40 27,22 29,14 C33,7 46,7 50,14 C53,24 52,38 50,52 Z" fill="#a3958e"/><path d="M29,16 C33,7 46,6 51,16 C47,10 40,11 29,22 Z" fill="#332c3a"/><path d="M-4,52 V37 C6,32 16,30 22,32 L29,52 Z" fill="#bdb4ac"/><path d="M31.5,21 h5.5 M42,21 h5.5" stroke="#4b3f42" stroke-width="1.4"/><path d="M36,33.5 h7.5" stroke="#7e5f5e" stroke-width="1.3"/><path d="M39.5,23 v6" stroke="#8d7d77" stroke-width="1.2"/></g></g></svg>
<span class="t" style="left:238.8px;top:471.80px;font-size:9.2px;line-height:13px;color:#fff;font-weight:700;letter-spacing:-0.08px;">Jessica Cartwright</span>
<span class="t" style="left:238.8px;top:483.60px;font-size:7.4px;line-height:10px;color:#8c8c8c;">Match 92%</span>
<svg style="left:242.4px;top:603px" width="64" height="22" viewBox="0 0 64 22"><rect width="64" height="22" fill="#dddcd5"/><rect x="0.8" y="0.8" width="62.4" height="4.6" fill="#8c9890"/><rect x="11" y="1.6" width="42" height="3" fill="#b4bcb4"/><circle cx="28.6" cy="17.4" r="4.2" fill="#d98a3a"/><circle cx="27.6" cy="18.8" r="2.6" fill="#3f8f5a"/><text x="3.4" y="22.4" font-family="Liberation Sans" font-weight="700" font-size="19" fill="#1c1c1c" textLength="20.2" lengthAdjust="spacingAndGlyphs">ADY</text><text x="34.1" y="22.4" font-family="Liberation Sans" font-weight="700" font-size="19" fill="#1c1c1c" textLength="26.7" lengthAdjust="spacingAndGlyphs">7068</text></svg>
<div class="r" style="left:216px;top:35px;width:737px;height:32px;background:#000;"></div>
<div class="r" style="left:229.5px;top:45.5px;width:11px;height:1.4px;background:#e8e8e8;"></div>
<div class="r" style="left:229.5px;top:50px;width:11px;height:1.4px;background:#e8e8e8;"></div>
<div class="r" style="left:229.5px;top:54.5px;width:11px;height:1.4px;background:#e8e8e8;"></div>
<span class="t" style="left:255px;top:42.50px;font-size:11.2px;line-height:16px;color:#fff;font-weight:700;letter-spacing:-0.1px;-webkit-text-stroke:0.45px #fff;">Honeywell</span>
<span class="t" style="left:317px;top:43.80px;font-size:9.7px;line-height:14px;color:#f2f2f2;-webkit-text-stroke:0.3px #f2f2f2;">INTELLIGENT COMMAND</span>
<div class="r" style="left:438px;top:45px;width:1px;height:10px;background:#777;"></div>
<span class="t" style="left:445px;top:44.80px;font-size:8.4px;line-height:12px;color:#d0d0d0;">Spaces</span>
<div class="r" style="left:925px;top:40px;width:21px;height:21px;background:#ededed;border-radius:50%;"></div>
<span class="t" style="left:935.5px;top:45.60px;font-size:7.2px;line-height:10px;color:#222;font-weight:700;transform:translateX(-50%);">HW</span>
<div class="r" style="left:0px;top:622px;width:1170px;height:36px;background:#fff;"></div>
<div class="r" style="left:953px;top:0px;width:217px;height:658px;background:#fff;"></div>
<div class="r" style="left:0px;top:0px;width:216px;height:658px;background:#fff;"></div>
<div class="r" style="left:0px;top:0px;width:1170px;height:35px;background:#fff;"></div>
</body></html>
